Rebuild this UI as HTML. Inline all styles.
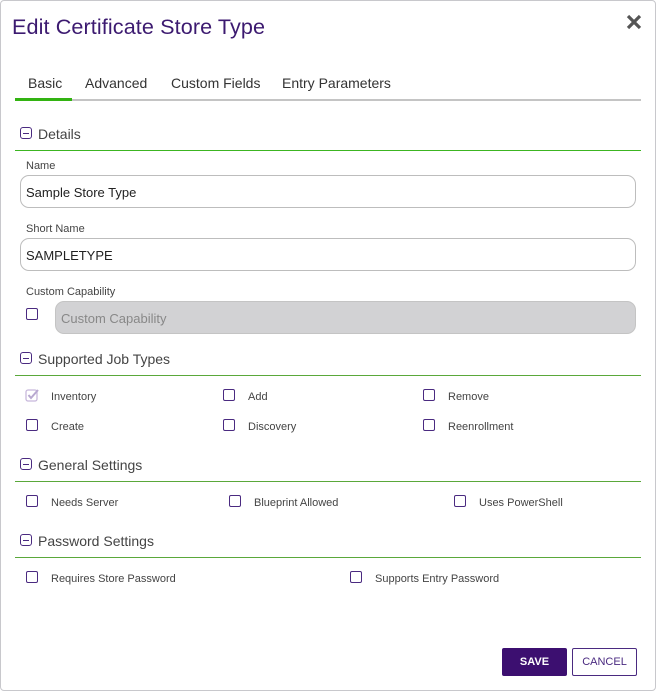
<!DOCTYPE html>
<html><head><meta charset="utf-8"><style>
*{box-sizing:border-box;margin:0;padding:0}
body{width:658px;height:693px;background:#fff;font-family:"Liberation Sans",sans-serif;position:relative;overflow:hidden;color:#333}
.dlg{position:absolute;left:0;top:0;width:656px;height:691px;border:1px solid #c8c8cc;border-radius:4px;background:#fff}
.a{position:absolute;white-space:nowrap}
.title{left:12px;top:14px;font-size:21.6px;color:#3c1a70;letter-spacing:0.1px}
.tab{top:75px;font-size:14px;color:#333}
.line{position:absolute;height:1px;left:15px;width:626px;background:#5aa83a}
.sec{font-size:14px;color:#444;top:0}
.mi{position:absolute;width:12px;height:12px;border:1.3px solid #4a2a80;border-radius:3px}
.mi:after{content:"";position:absolute;left:2px;right:2px;top:4.5px;height:1.3px;background:#4a2a80}
.lbl{font-size:11px;color:#444}
.inp{position:absolute;border:1px solid #bdbdbd;border-radius:9px;height:33px;font-size:13px;color:#222;padding:9px 5px}
.cb{position:absolute;width:12px;height:12px;border:1.4px solid #4a2a80;border-radius:2px}
.ct{font-size:11px;color:#444}
</style></head><body>
<div class="dlg"></div>
<div class="a title">Edit Certificate Store Type</div>
<svg class="a" style="left:626px;top:14px" width="16" height="16" viewBox="0 0 16 16"><path d="M2 2L14 14M14 2L2 14" stroke="#555" stroke-width="3.2"/></svg>
<div class="a tab" style="left:28px">Basic</div>
<div class="a tab" style="left:85px">Advanced</div>
<div class="a tab" style="left:171px">Custom Fields</div>
<div class="a tab" style="left:282px">Entry Parameters</div>
<div class="a" style="left:15px;top:99px;width:626px;height:2px;background:#c4c4c4"></div>
<div class="a" style="left:15px;top:98px;width:57px;height:3px;background:#33b312"></div>

<div class="mi" style="left:20px;top:127px"></div><div class="a sec" style="left:38px;top:126px">Details</div>
<div class="line" style="top:150px;background:#3cb521"></div>
<div class="a lbl" style="left:26px;top:160px">Name</div>
<div class="inp" style="left:20px;top:175px;width:616px">Sample Store Type</div>
<div class="a lbl" style="left:26px;top:223px">Short Name</div>
<div class="inp" style="left:20px;top:238px;width:616px">SAMPLETYPE</div>
<div class="a lbl" style="left:26px;top:286px">Custom Capability</div>
<div class="cb" style="left:26px;top:308px"></div>
<div class="inp" style="left:55px;top:301px;width:581px;background:#d2d2d4;color:#888;border-color:#c4c4c4">Custom Capability</div>

<div class="mi" style="left:20px;top:352px"></div><div class="a sec" style="left:38px;top:351px">Supported Job Types</div>
<div class="line" style="top:375px"></div>
<svg class="a" style="left:25px;top:388px" width="15" height="14" viewBox="0 0 15 14"><rect x="1" y="2" width="11" height="11" rx="2" fill="none" stroke="#c8b8dc" stroke-width="1.3"/><path d="M3.5 7L6 10L13 2" fill="none" stroke="#b8a8d0" stroke-width="2"/></svg>
<div class="a ct" style="left:51px;top:391px">Inventory</div>
<div class="cb" style="left:223px;top:389px"></div><div class="a ct" style="left:248px;top:391px">Add</div>
<div class="cb" style="left:423px;top:389px"></div><div class="a ct" style="left:448px;top:391px">Remove</div>
<div class="cb" style="left:26px;top:419px"></div><div class="a ct" style="left:51px;top:421px">Create</div>
<div class="cb" style="left:223px;top:419px"></div><div class="a ct" style="left:248px;top:421px">Discovery</div>
<div class="cb" style="left:423px;top:419px"></div><div class="a ct" style="left:448px;top:421px">Reenrollment</div>

<div class="mi" style="left:20px;top:458px"></div><div class="a sec" style="left:38px;top:457px">General Settings</div>
<div class="line" style="top:481px"></div>
<div class="cb" style="left:26px;top:495px"></div><div class="a ct" style="left:51px;top:497px">Needs Server</div>
<div class="cb" style="left:229px;top:495px"></div><div class="a ct" style="left:254px;top:497px">Blueprint Allowed</div>
<div class="cb" style="left:454px;top:495px"></div><div class="a ct" style="left:479px;top:497px">Uses PowerShell</div>

<div class="mi" style="left:20px;top:534px"></div><div class="a sec" style="left:38px;top:533px">Password Settings</div>
<div class="line" style="top:557px"></div>
<div class="cb" style="left:26px;top:571px"></div><div class="a ct" style="left:51px;top:573px">Requires Store Password</div>
<div class="cb" style="left:350px;top:571px"></div><div class="a ct" style="left:375px;top:573px">Supports Entry Password</div>

<div class="a" style="left:502px;top:648px;width:65px;height:28px;background:#3c0f70;border-radius:2px;color:#fff;font-size:11px;font-weight:bold;text-align:center;line-height:28px">SAVE</div>
<div class="a" style="left:572px;top:648px;width:65px;height:28px;border:1px solid #4a2a80;border-radius:2px;color:#4a2a80;font-size:11px;text-align:center;line-height:26px">CANCEL</div>
</body></html>
